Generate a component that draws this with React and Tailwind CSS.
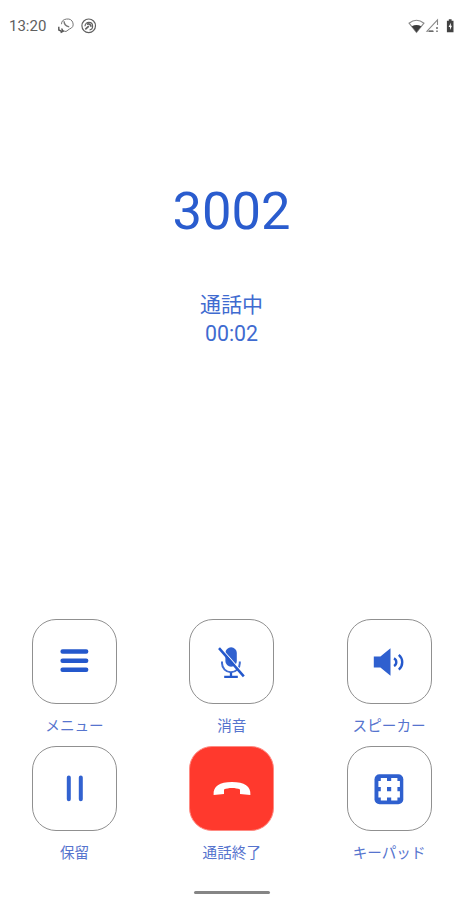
import React from "react";

function MenuIcon() {
  return (
    <svg className="h-8 w-10" viewBox="0 0 40 32" stroke="#2458cc" strokeWidth="4.4" strokeLinecap="round">
      <path d="M7.6 5.5H31.2M7.6 14.7H31.2M7.6 23.8H31.2" />
    </svg>
  );
}

function MicOffIcon() {
  return (
    <svg className="h-8 w-10" viewBox="0 0 40 32" fill="none">
      <rect x="13.4" y="1.3" width="11.4" height="19.4" rx="5.7" fill="#2f60cf" />
      <path d="M10 15.5v1.8a8.7 8.7 0 0 0 17.8 0v-1.8" stroke="#3f6cd2" strokeWidth="2" />
      <path d="M19 26.5V31M12.2 30.8H25.8" stroke="#2458cc" strokeWidth="2.3" />
      <path d="M8.9 1.8L32.7 28.8" stroke="#fff" strokeWidth="1.2" />
      <path d="M7 2.2L31.8 30.4" stroke="#2458cc" strokeWidth="2.5" />
    </svg>
  );
}

function SpeakerIcon() {
  return (
    <svg className="h-8 w-10" viewBox="0 0 40 32" fill="none">
      <path d="M4.8 10.5h6.6L21.5 2.3V29.8L11.4 21.5H4.8z" fill="#2f60cf" />
      <path d="M25 12.4a4.3 4.3 0 0 1 0 7.6M29.8 8.8a9.7 9.7 0 0 1 0 14.8" stroke="#2458cc" strokeWidth="2.4" />
    </svg>
  );
}

function PauseIcon() {
  return (
    <svg className="h-8 w-10" viewBox="0 0 40 32" stroke="#3262d0" strokeWidth="4" strokeLinecap="round">
      <path d="M13.8 4.6V26.2M25.8 4.6V26.2" />
    </svg>
  );
}

function HangUpIcon() {
  return (
    <svg className="h-8 w-10" viewBox="0 0 40 32" fill="#fff">
      <path d="M1.6 21.9C1 12.9 7.5 8.9 20 8.9s19 4 18.4 13L28 20.9V16.4C24 14.4 16 14.4 12 16.4V20.9Z" />
    </svg>
  );
}

function KeypadIcon() {
  return (
    <svg className="h-8 w-10" viewBox="0 0 40 32">
      <rect x="5.5" y="1.2" width="28.8" height="30" rx="5" fill="#2f60cf" />
      <path d="M14.9 5V27.5M25.3 5V27.5M9.4 11H30.9M9.4 21.4H30.9" stroke="#fff" strokeWidth="6.2" />
    </svg>
  );
}

function CallSyncIcon() {
  return (
    <svg className="h-4 w-4" viewBox="0 0 16 16" fill="none" stroke="#777">
      <path d="M3.5 6.2A5.8 5.2 0 1 1 11.5 11L8 13.5 4.5 12.7" strokeWidth="1" />
      <path d="M6 3.3c.2 3 2.2 5 5.2 5.6" strokeWidth="1.4" />
      <path d="M.8 8.8V12l3 1.4M3.6 10.5l1.5 2.8-2.5 1.2" stroke="#555" strokeWidth="1.4" />
    </svg>
  );
}

function CircleCallIcon() {
  return (
    <svg className="h-4 w-4" viewBox="0 0 16 16" fill="none" stroke="#606060">
      <circle cx="7.7" cy="7.8" r="6.8" strokeWidth="1.2" />
      <path d="M4 8.2c0-5 7.6-5 7.6 0 0 2-1.2 3.5-3 3.6" strokeWidth="1.2" />
      <path d="M5.8 6.4c2-1.4 4.3.2 4.2 2.4M4.3 11.4l3.5-3.2" strokeWidth="1.7" />
    </svg>
  );
}

function StatusIcons() {
  return (
    <svg className="h-4 w-12" viewBox="0 0 48 16" fill="none">
      <path d="M1 5.2Q8.5-.8 16 5.2L8.5 14.3Z" stroke="#888" strokeWidth="1.1" />
      <path d="M3.7 8.2Q8.5 5.6 13.3 8.2L8.5 14.3Z" fill="#3c3c3c" />
      <path d="M29.5 7V1.8L19 13.2H26" stroke="#888" strokeWidth="1.1" />
      <path d="M29 9v2M29 12.4v1.6M21 13.2h4" stroke="#555" strokeWidth="1.3" />
      <path d="M38.9 2.8h1.9V1.2h2.8v1.6h1.9v11.4h-6.6z" fill="#424242" />
      <path d="M42.8 4.8L40.6 9H42v3l2-4.2h-1.2z" fill="#fff" />
    </svg>
  );
}

const rows = [
  [
    { label: "メニュー", Icon: MenuIcon },
    { label: "消音", Icon: MicOffIcon },
    { label: "スピーカー", Icon: SpeakerIcon },
  ],
  [
    { label: "保留", Icon: PauseIcon },
    { label: "通話終了", Icon: HangUpIcon, danger: true },
    { label: "キーパッド", Icon: KeypadIcon },
  ],
];

function CallButton({ label, Icon, danger }) {
  return (
    <div className="flex w-[85px] flex-col items-center">
      <button
        aria-label={label}
        className={
          danger
            ? "flex h-[85px] w-[85px] items-center justify-center rounded-[23px] border border-[#ff8a82] bg-[#ff392d]"
            : "flex h-[85px] w-[85px] items-center justify-center rounded-[24px] border border-[#909090] bg-white"
        }
      >
        <Icon />
      </button>
      <span className="mt-[11px] h-[21px] text-[14.6px] leading-[22px] whitespace-nowrap text-[#5674ce]">{label}</span>
    </div>
  );
}

export default function App() {
  return (
    <main className="flex h-[900px] w-[462px] flex-col bg-white font-['Roboto','Noto_Sans_CJK_JP',sans-serif]">
      <header className="flex h-[52px] items-center justify-between pr-[6px] pl-[9px]">
        <div className="flex items-center">
          <span className="w-[49px] text-[15px] leading-5 text-[#606060]">13:20</span>
          <CallSyncIcon />
          <span className="w-[7px]" />
          <CircleCallIcon />
        </div>
        <StatusIcons />
      </header>
      <section className="flex flex-col items-center pt-[128px] pl-px text-[#2a5cce]">
        <h1 className="h-[62px] text-[52.5px] leading-[62px]">3002</h1>
        <p className="mt-[48px] h-[30px] text-[21px] leading-[30px] text-[#3f6bd0]">通話中</p>
        <p className="h-[28px] text-[21.3px] leading-[28px] text-[#3f6bd0]">00:02</p>
      </section>
      <section className="mt-auto flex flex-col gap-[10px] pr-[30.4px] pl-8">
        {rows.map((row, i) => (
          <div key={i} className="flex justify-between">
            {row.map((item) => (
              <CallButton key={item.label} {...item} />
            ))}
          </div>
        ))}
      </section>
      <footer className="flex h-[37px] justify-center pt-[28px] pl-px">
        <div className="h-[3px] w-[76px] rounded-full bg-[#858585]" />
      </footer>
    </main>
  );
}
